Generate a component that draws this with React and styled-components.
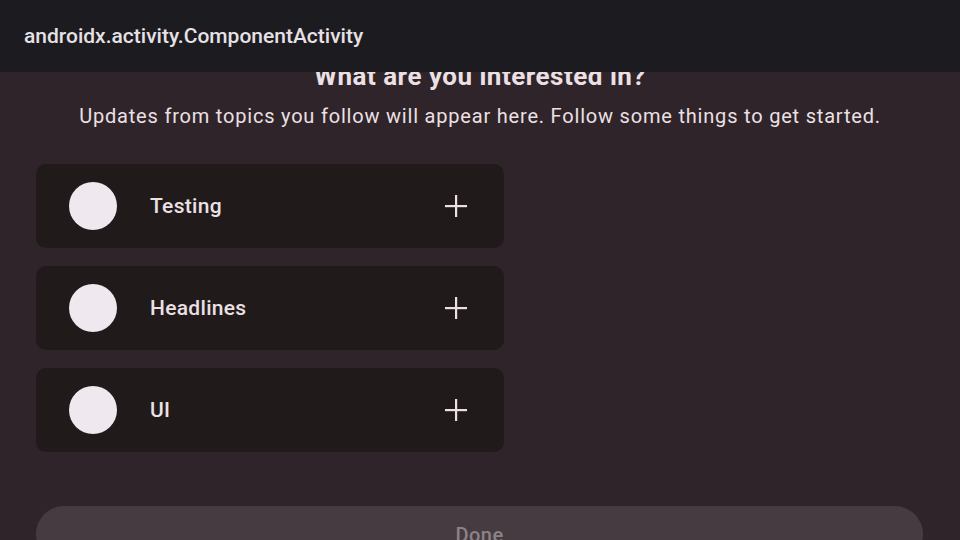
import { createGlobalStyle } from "styled-components";
import styled from "styled-components";

const GlobalStyle = createGlobalStyle`
  html, body {
    margin: 0;
    padding: 0;
    background: #2f2429;
    font-family: Roboto, "Noto Sans", sans-serif;
  }
`;

const topics = ["Testing", "Headlines", "UI"];

const PlusIcon = () => (
  <svg width="22" height="22" viewBox="0 0 22 22">
    <rect x="10" y="0" width="2.2" height="22" fill="#ece0e4" />
    <rect x="0" y="10" width="22" height="2.2" fill="#ece0e4" />
  </svg>
);

const App = () => {
  return (
    <>
      <GlobalStyle />
      <Screen>
        <TitleBar>androidx.activity.ComponentActivity</TitleBar>
        <Content>
          <Title>What are you interested in?</Title>
          <Subtitle>
            Updates from topics you follow will appear here. Follow some things
            to get started.
          </Subtitle>
          <TopicList>
            {topics.map((name) => (
              <TopicCard key={name}>
                <Avatar />
                <TopicName>{name}</TopicName>
                <FollowButton>
                  <PlusIcon />
                </FollowButton>
              </TopicCard>
            ))}
          </TopicList>
          <DoneButton>Done</DoneButton>
        </Content>
      </Screen>
    </>
  );
};

const Screen = styled.div`
  width: 960px;
  height: 540px;
  display: flex;
  flex-direction: column;
  overflow: hidden;
  background: #2f2429;
`;

const TitleBar = styled.div`
  position: relative;
  z-index: 1;
  flex: 0 0 72px;
  display: flex;
  align-items: center;
  padding: 0 24px;
  background: #1c1b20;
  color: #e6e1e5;
  font-size: 21px;
  font-weight: 500;
`;

const Content = styled.div`
  flex: 1;
  display: flex;
  flex-direction: column;
  align-items: center;
  padding: 0 36px;
`;

const Title = styled.h1`
  margin: -12px 0 0;
  font-size: 26px;
  line-height: 32px;
  letter-spacing: 0.5px;
  font-weight: 700;
  color: #ece0e4;
  white-space: nowrap;
`;

const Subtitle = styled.p`
  margin: 11px 0 0;
  font-size: 20px;
  line-height: 26px;
  letter-spacing: 0.8px;
  color: #ece0e4;
  white-space: nowrap;
`;

const TopicList = styled.div`
  align-self: stretch;
  display: flex;
  flex-direction: column;
  gap: 18px;
  margin-top: 35px;
`;

const TopicCard = styled.div`
  width: 468px;
  height: 84px;
  box-sizing: border-box;
  display: flex;
  align-items: center;
  padding: 0 37px 0 33px;
  border-radius: 10px;
  background: #201a1b;
`;

const Avatar = styled.div`
  width: 48px;
  height: 48px;
  border-radius: 50%;
  background: #efe8ef;
`;

const TopicName = styled.span`
  flex: 1;
  margin-left: 33px;
  font-size: 21px;
  font-weight: 500;
  letter-spacing: 0.3px;
  color: #ece0e4;
`;

const FollowButton = styled.div`
  display: flex;
  width: 22px;
  height: 22px;
`;

const DoneButton = styled.div`
  align-self: stretch;
  width: 887px;
  height: 56px;
  margin-top: 54px;
  display: flex;
  justify-content: center;
  padding-top: 17px;
  box-sizing: border-box;
  border-radius: 28px;
  background: #463b41;
  color: #8c8287;
  font-size: 20px;
  letter-spacing: 0.5px;
  font-weight: 500;
`;

export default App;
